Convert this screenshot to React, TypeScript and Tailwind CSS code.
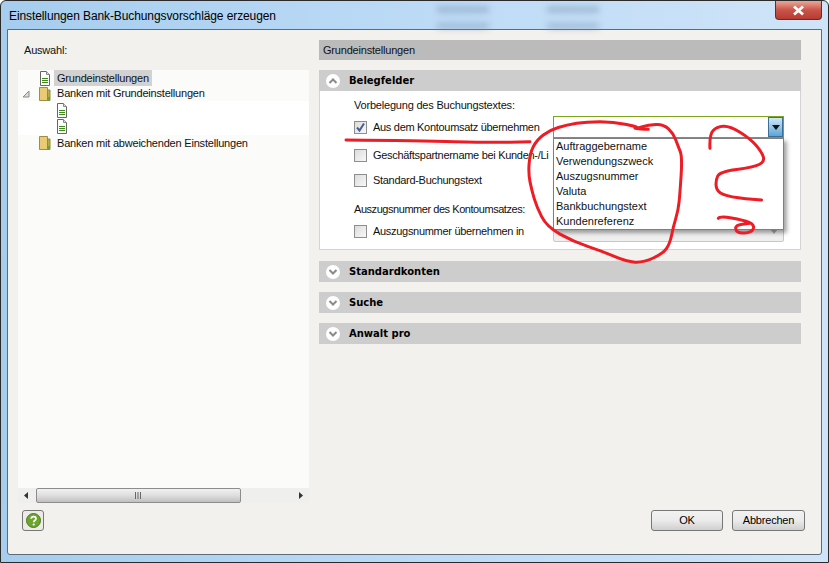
const FONT = "font-['Liberation_Sans',Arial,sans-serif]";

const DROPDOWN_ITEMS = [
  "Auftraggebername",
  "Verwendungszweck",
  "Auszugsnummer",
  "Valuta",
  "Bankbuchungstext",
  "Kundenreferenz",
];

// pen strokes, in 3x coordinates
const PEN_STROKES: [number, number][][] = [
  [[78, 90], [300, 92], [510, 98], [630, 95]],
  [[985, 58], [935, 55], [960, 52], [880, 35], [800, 35], [740, 45], [690, 60], [650, 90], [630, 130], [625, 190], [635, 240], [650, 290], [680, 350], [760, 395], [850, 425], [920, 455], [970, 458], [1030, 430], [1050, 400], [1060, 350], [1075, 300], [1080, 250], [1087, 140], [1075, 110], [1060, 70], [1030, 42], [985, 45], [950, 55]],
  [[1170, 115], [1168, 75], [1190, 50], [1230, 48], [1290, 85], [1325, 125], [1335, 155], [1300, 172], [1200, 185], [1187, 210], [1190, 245], [1230, 262], [1325, 270]],
  [[1195, 325], [1200, 318], [1270, 330], [1305, 345], [1295, 368], [1250, 370], [1245, 345], [1290, 340]],
];

function smoothPath(pts: [number, number][]) {
  let d = `M${pts[0][0]} ${pts[0][1]}`;
  for (let i = 1; i < pts.length - 1; i++) {
    const mx = (pts[i][0] + pts[i + 1][0]) / 2;
    const my = (pts[i][1] + pts[i + 1][1]) / 2;
    d += ` Q${pts[i][0]} ${pts[i][1]} ${mx} ${my}`;
  }
  const last = pts[pts.length - 1];
  return `${d} L${last[0]} ${last[1]}`;
}

function DocIcon() {
  return (
    <svg width="12" height="15" viewBox="0 0 12 15" className="shrink-0">
      <path d="M1.5 .5h6l3 3v11h-9z" fill="#fff" stroke="#666" />
      <path d="M7.5 .5v3h3" fill="#ddd" stroke="#888" />
      <path d="M3 7.5h6M3 9.5h6M3 11.5h6" stroke="#3f8a1a" />
    </svg>
  );
}

function FolderIcon() {
  return (
    <svg width="12" height="14" viewBox="0 0 12 14" className="shrink-0">
      <path d="M.5 .5h8v13h-8z" fill="#e8cb72" stroke="#a38a45" />
      <path d="M8.500 3h2.500v10.500h-2.500z" fill="#b9a84a" stroke="#8f8a50" />
      <path d="M9 10h2v3.500h-2z" fill="#6ea033" />
    </svg>
  );
}

function Checkbox({ checked }: { checked?: boolean }) {
  return (
    <span className="flex h-[13px] w-[13px] shrink-0 items-center justify-center border border-[#8e8e8e] bg-gradient-to-br from-[#dcdcdc] to-[#f8f8f8]">
      {checked && (
        <svg width="11" height="11" viewBox="0 0 11 11">
          <path d="M2 5.500l2.500 3L9 1.500" fill="none" stroke="#4a5f97" strokeWidth="2" />
        </svg>
      )}
    </span>
  );
}

function Chevron({ up }: { up?: boolean }) {
  return (
    <span className="flex h-[14px] w-[14px] shrink-0 items-center justify-center rounded-full bg-white">
      <svg width="10" height="8" viewBox="0 0 10 8">
        <path d={up ? "M1.500 6L5 2.500 8.500 6" : "M1.500 2L5 5.500 8.500 2"} fill="none" stroke="#8a8a8a" strokeWidth="2" />
      </svg>
    </span>
  );
}

function SectionHeader({ label, up }: { label: string; up?: boolean }) {
  return (
    <div className="flex h-[21px] items-center gap-[9px] bg-[#cdcdcd] pl-[7px]">
      <Chevron up={up} />
      <span className="font-['DejaVu_Sans',sans-serif] text-[10px] font-bold tracking-normal text-black">{label}</span>
    </div>
  );
}

function CheckRow({ label, checked, className, children }: { label: string; checked?: boolean; className?: string; children?: React.ReactNode }) {
  return (
    <div className={`flex h-[22px] items-center ${className ?? ""}`}>
      <div className="flex w-[199px] shrink-0 items-center gap-[6px] whitespace-nowrap">
        <Checkbox checked={checked} />
        <span className="tracking-[-0.3px]">{label}</span>
      </div>
      {children}
    </div>
  );
}

function TextButton({ label, className }: { label: string; className?: string }) {
  return (
    <button className={`flex h-[21px] items-center justify-center rounded-[3px] border border-[#777] bg-gradient-to-b from-[#f2f2f2] via-[#ebebeb] to-[#cfcfcf] text-[11px] text-black ${className ?? ""}`}>
      {label}
    </button>
  );
}

export default function App() {
  return (
    <div className={`relative flex h-[563px] w-[829px] flex-col overflow-hidden rounded-t-[6px] border border-[#2a2a2a] bg-gradient-to-r from-[#a6cdee] via-[#bcdaf6] to-[#cfe4f8] px-[6px] pb-[7px] text-[11px] tracking-[-0.2px] text-[#111] ${FONT}`}>
      {/* Title bar */}
      <div className="relative flex h-[28px] shrink-0 items-start justify-between">
        <span className="pl-[2px] pt-[6px] text-[12px] leading-[18px] tracking-[-0.1px] text-black">Einstellungen Bank-Buchungsvorschläge erzeugen</span>
        <span className="absolute left-[430px] top-[5px] h-[7px] w-[52px] bg-[#6d88a8] opacity-40 blur-[3px]" />
        <span className="absolute left-[540px] top-[5px] h-[7px] w-[52px] bg-[#6d88a8] opacity-40 blur-[3px]" />
        <span className="absolute left-[430px] top-[22px] h-[6px] w-[52px] bg-[#6d88a8] opacity-40 blur-[3px]" />
        <span className="absolute left-[540px] top-[22px] h-[6px] w-[52px] bg-[#6d88a8] opacity-40 blur-[3px]" />
        <span className="flex h-[19px] w-[47px] items-center justify-center rounded-b-[4px] border border-t-0 border-[#5b3030] bg-gradient-to-b from-[#e8a898] via-[#c9544a] to-[#b83a30]">
          <svg width="13" height="11" viewBox="0 0 13 11">
            <path d="M2 1.500l9 8M11 1.500l-9 8" stroke="#fff" strokeWidth="2.800" />
          </svg>
        </span>
      </div>

      {/* Dialog body */}
      <div className="flex min-h-0 flex-1 flex-col rounded-b-[3px] border border-[#5f6b75] bg-[#f2f1ee]">
        <div className="flex h-[473px] shrink-0 gap-[10px] pl-[10px] pt-[10px]">
          {/* Left column */}
          <div className="flex w-[291px] shrink-0 flex-col">
            <div className="flex h-[30px] shrink-0 items-start pl-[6px] pt-[3px] leading-[14px]">Auswahl:</div>
            <div className="flex-1 bg-[#fbfbf9]">
              <div className="flex h-[16px] items-center pl-[21px]">
                <DocIcon />
                <span className="ml-[3px] flex h-[16px] w-[98px] items-center bg-[#d2d2d2] pl-[3px]">Grundeinstellungen</span>
              </div>
              <div className="flex h-[15px] items-center pl-[4px]">
                <svg width="8" height="8" viewBox="0 0 8 8" className="mr-[9px] shrink-0">
                  <path d="M7 1v6H1z" fill="#ddd" stroke="#8a8a8a" />
                </svg>
                <FolderIcon />
                <span className="ml-[6px] whitespace-nowrap">Banken mit Grundeinstellungen</span>
              </div>
              <div className="flex h-[34px] flex-col gap-[1px] bg-white pl-[38px] pt-[2px]">
                <DocIcon />
                <DocIcon />
              </div>
              <div className="flex h-[16px] items-center pl-[21px]">
                <FolderIcon />
                <span className="ml-[6px] whitespace-nowrap">Banken mit abweichenden Einstellungen</span>
              </div>
            </div>
            {/* Scrollbar */}
            <div className="flex h-[15px] shrink-0 items-center justify-between bg-[#efefed]">
              <svg width="18" height="15" viewBox="0 0 18 15"><path d="M10 4v7L6 7.500z" fill="#333" /></svg>
              <div className="flex h-[15px] w-[205px] items-center justify-center rounded-[2px] border border-[#8c8c8c] bg-gradient-to-b from-[#f1f1f1] via-[#dedede] to-[#c0c0c0]">
                <svg width="8" height="7" viewBox="0 0 8 7"><path d="M.5 0v7M3 0v7M5.500 0v7" stroke="#666" /></svg>
              </div>
              <div className="flex-1" />
              <svg width="18" height="15" viewBox="0 0 18 15"><path d="M8 4v7l4-3.500z" fill="#333" /></svg>
            </div>
          </div>

          {/* Right column */}
          <div className="flex w-[482px] shrink-0 flex-col gap-[10px]">
            <div className="flex h-[20px] items-center bg-[#bbbbbb] pl-[4px]">Grundeinstellungen</div>
            <div>
              <SectionHeader label="Belegfelder" up />
              <div className="relative h-[159px] border border-t-0 border-[#d4d4d4] bg-white pl-[34px] pt-[7px]">
                <div className="h-[15px] leading-[15px]">Vorbelegung des Buchungstextes:</div>
                <CheckRow label="Aus dem Kontoumsatz übernehmen" checked className="mt-[3px]">
                  <div className="flex h-[22px] w-[231px] justify-end border border-[#7fa51a] bg-white">
                    <span className="flex w-[15px] items-center justify-center border border-[#3c6e96] bg-gradient-to-b from-[#cfe8f8] to-[#5aa5d8]">
                      <svg width="8" height="5" viewBox="0 0 8 5"><path d="M0 0h8L4 5z" fill="#111" /></svg>
                    </span>
                  </div>
                </CheckRow>
                <CheckRow label="Geschäftspartnername bei Kunden-/Li" className="mt-[6px]" />
                <CheckRow label="Standard-Buchungstext" className="mt-[3px]" />
                <div className="mt-[11px] h-[15px] leading-[15px] tracking-[-0.45px]">Auszugsnummer des Kontoumsatzes:</div>
                <CheckRow label="Auszugsnummer übernehmen in" className="mt-[3px]">
                  <div className="flex h-[22px] w-[231px] items-center justify-end rounded-[2px] border border-[#c8c8c8] bg-[#efefef] pr-[5px]">
                    <svg width="8" height="5" viewBox="0 0 8 5"><path d="M0 0h8L4 5z" fill="#aaa" /></svg>
                  </div>
                </CheckRow>

                {/* Open dropdown list */}
                <div className="absolute left-[233px] top-[47px] flex h-[92px] w-[231px] flex-col border border-[#7f7f7f] bg-white pl-[2px] tracking-normal shadow-[3px_3px_4px_rgba(0,0,0,0.35)]">
                  {DROPDOWN_ITEMS.map((item) => (
                    <div key={item} className="h-[15px] leading-[15px]">{item}</div>
                  ))}
                </div>
              </div>
            </div>
            <div className="mt-[1px]"><SectionHeader label="Standardkonten" /></div>
            <SectionHeader label="Suche" />
            <SectionHeader label="Anwalt pro" />
          </div>
        </div>

        {/* Footer */}
        <div className="mt-[7px] flex items-center justify-between pl-[14px] pr-[16px]">
          <span className="flex h-[21px] w-[22px] items-center justify-center rounded-[3px] border border-[#777] bg-[#ecebe8]">
            <svg width="15" height="15" viewBox="0 0 15 15">
              <circle cx="7.500" cy="7.500" r="7" fill="#6da52c" stroke="#4d7d1c" />
              <path d="M5.200 5.800c0-3 4.800-3 4.800 0 0 1.800-2.300 1.700-2.300 3.400" fill="none" stroke="#fff" strokeWidth="1.700" />
              <circle cx="7.700" cy="11.500" r="1.100" fill="#fff" />
            </svg>
          </span>
          <div className="flex gap-[9px]">
            <TextButton label="OK" className="w-[72px]" />
            <TextButton label="Abbrechen" className="w-[73px]" />
          </div>
        </div>
      </div>

      {/* Red pen annotations drawn over the screenshot */}
      <svg width="829" height="563" viewBox="0 0 829 563" className="pointer-events-none absolute -left-px -top-px">
        <g transform="translate(320 110) scale(0.3333)" fill="none" stroke="#ee1c25" strokeWidth="9" strokeLinecap="round" strokeLinejoin="round">
          {PEN_STROKES.map((pts, i) => (
            <path key={i} d={smoothPath(pts)} />
          ))}
        </g>
      </svg>
    </div>
  );
}
